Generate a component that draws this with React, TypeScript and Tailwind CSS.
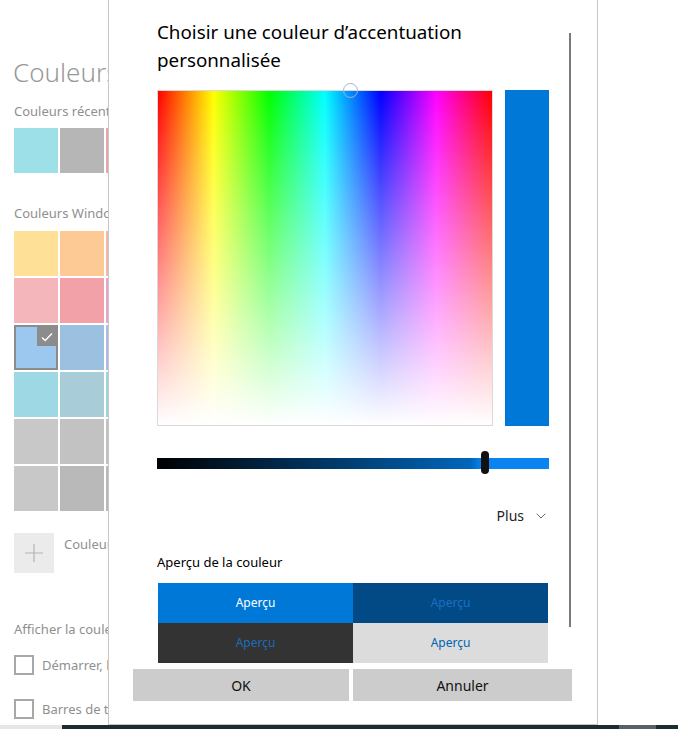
import { ChevronDown } from "lucide-react";

const recent = ["#9de0e8", "#b6b6b6", "#e8a6ac"];

const windowsColors = [
  ["#fee096", "#fdca96", "#f6b8a6"],
  ["#f4b5bb", "#f2a1a9", "#e6a8c8"],
  ["#9cc8f0", "#9bc0e0", "#b0b8e8"],
  ["#9fd8e5", "#a9cdd8", "#9ad8d8"],
  ["#c9c8c8", "#c3c2c2", "#c0c0c0"],
  ["#c8c8c8", "#b9b9b9", "#b8b8b8"],
];

function Swatch({ color, selected }: { color: string; selected?: boolean }) {
  return (
    <div
      className={`relative w-[44px] h-[45px] shrink-0 ${selected ? "border-2 border-[#8c8c8c]" : ""}`}
      style={{ backgroundColor: color }}
    >
      {selected && (
        <div className="absolute top-0 right-0 w-[19px] h-[19px] bg-[#8c8c8c] flex items-center justify-center">
          <svg width="12" height="10" viewBox="0 0 12 10" fill="none">
            <path d="M1 5.5 L4.2 8.5 L11 1.5" stroke="#fff" strokeWidth="1.4" />
          </svg>
        </div>
      )}
    </div>
  );
}

function SettingsPanel() {
  return (
    <div className="w-[108px] shrink-0 overflow-hidden">
      <div className="w-[300px] pl-[14px] text-[#8f8f8f] whitespace-nowrap">
        <h1 className="mt-[55px] -ml-[1px] text-[26px] font-light leading-[34px] text-[#9a9a9a]">
          Couleurs
        </h1>
        <p className="mt-[13px] text-[13px] leading-[18px]">Couleurs récentes</p>
        <div className="mt-[8px] flex gap-[2px]">
          {recent.map((c) => (
            <Swatch key={c} color={c} />
          ))}
        </div>
        <p className="mt-[31px] text-[13px] leading-[18px]">Couleurs Windows</p>
        <div className="mt-[9px] flex flex-col gap-[2px]">
          {windowsColors.map((row, i) => (
            <div key={i} className="flex gap-[2px]">
              {row.map((c, j) => (
                <Swatch key={c} color={c} selected={i === 2 && j === 0} />
              ))}
            </div>
          ))}
        </div>
        <div className="mt-[22px] flex items-start gap-[10px]">
          <div className="w-[40px] h-[40px] bg-[#ebebeb] flex items-center justify-center">
            <svg width="18" height="18" viewBox="0 0 18 18">
              <path d="M9 0 V18 M0 9 H18" stroke="#b4b4b4" strokeWidth="1.2" />
            </svg>
          </div>
          <span className="mt-[2px] text-[13px] leading-[18px]">Couleur personnalisée</span>
        </div>
        <p className="mt-[47px] text-[13px] leading-[18px]">
          Afficher la couleur d'accentuation sur les surfaces suivantes
        </p>
        <div className="mt-[17px] flex items-center gap-[8px]">
          <div className="w-[20px] h-[20px] border-2 border-[#a8a8a8]" />
          <span className="text-[13px] leading-[18px]">Démarrer, barre des tâches</span>
        </div>
        <div className="mt-[24px] flex items-center gap-[8px]">
          <div className="w-[20px] h-[20px] border-2 border-[#a8a8a8]" />
          <span className="text-[13px] leading-[18px]">Barres de titre</span>
        </div>
      </div>
    </div>
  );
}

function Preview({ bg, text, label }: { bg: string; text: string; label: string }) {
  return (
    <div
      className="h-[40px] flex items-center justify-center text-[12px]"
      style={{ backgroundColor: bg, color: text }}
    >
      {label}
    </div>
  );
}

function ColorDialog() {
  return (
    <div className="relative w-[490px] shrink-0 h-full bg-white border-x border-b border-[#c6c6c6] flex flex-col">
      {/* scrollbar */}
      <div className="absolute left-[460px] top-[33px] w-[2px] h-[594px] bg-[#7a7a7a]" />

      <div className="pl-[48px] pt-[18px]">
        <h2 className="text-[18.8px] leading-[28px] text-black">
          Choisir une couleur d’accentuation
          <br />
          personnalisée
        </h2>

        <div className="mt-[16px] flex gap-[12px]">
          <div className="relative w-[336px] h-[336px] border border-[#d9d9d9] bg-[linear-gradient(to_right,#ff0000,#ffff00,#00ff00,#00ffff,#0000ff,#ff00ff,#ff0000)]">
            <div className="absolute inset-0 bg-[linear-gradient(to_bottom,rgba(255,255,255,0),#ffffff)]" />
            <div className="absolute left-[185px] -top-[8px] w-[15px] h-[15px] rounded-full border-[1.5px] border-[#aab4c4] bg-transparent" />
          </div>
          <div className="w-[44px] h-[336px] bg-[#0078d7]" />
        </div>

        <div className="relative mt-[32px] w-[392px] h-[11px] bg-[linear-gradient(to_right,#000000,#0066bb_80%,#0a84f0_83%,#0a84f0)]">
          <div className="absolute left-[324px] -top-[7px] w-[8px] h-[23px] rounded-full bg-[#111111]" />
        </div>

        <div className="mt-[37px] w-[392px] flex justify-end items-center gap-[9px] text-[14px] leading-[20px] text-[#222]">
          <span>Plus</span>
          <ChevronDown size={16} strokeWidth={1.1} className="text-[#333]" />
        </div>

        <p className="mt-[27px] text-[13px] leading-[18px] text-black">Aperçu de la couleur</p>

        <div className="mt-[12px] ml-[1px] w-[390px] grid grid-cols-2">
          <Preview bg="#0078d7" text="#ffffff" label="Aperçu" />
          <Preview bg="#024a86" text="#1a6fc4" label="Aperçu" />
          <Preview bg="#333333" text="#1c6db6" label="Aperçu" />
          <Preview bg="#dcdcdc" text="#0063b1" label="Aperçu" />
        </div>
      </div>

      <div className="mt-[6px] pl-[24px] flex gap-[4px]">
        <button className="w-[216px] h-[32px] bg-[#cccccc] text-[14px] font-normal text-[#111]">OK</button>
        <button className="w-[219px] h-[32px] bg-[#cccccc] text-[14px] font-normal text-[#111]">Annuler</button>
      </div>
    </div>
  );
}

export default function App() {
  return (
    <div className="w-[678px] h-[729px] bg-white flex flex-col overflow-hidden font-['Noto_Sans',sans-serif]">
      <div className="flex-1 flex min-h-0">
        <SettingsPanel />
        <ColorDialog />
        <div className="flex-1" />
      </div>
      <div className="h-[4px] flex">
        <div className="w-[62px] bg-[#e6e6e6]" />
        <div className="w-[557px] bg-[#1d2c31]" />
        <div className="w-[37px] bg-[#5a6266]" />
        <div className="flex-1 bg-[#1d2c31]" />
      </div>
    </div>
  );
}
